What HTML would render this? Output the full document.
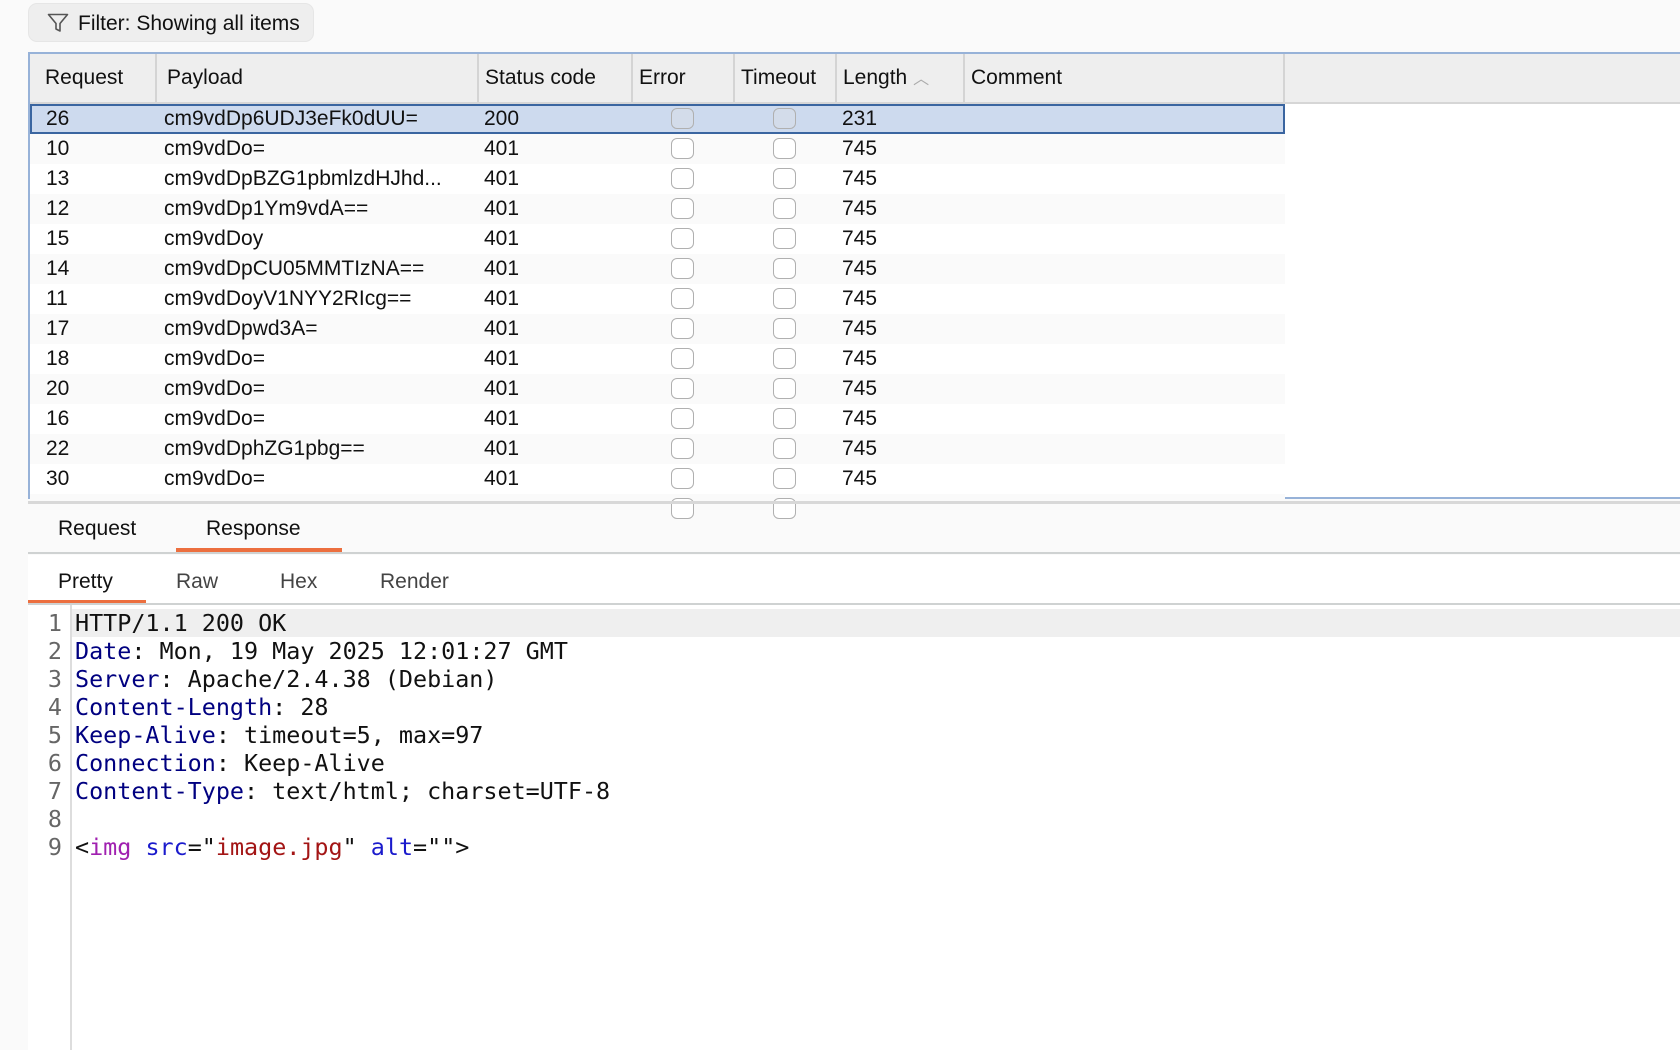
<!DOCTYPE html>
<html><head><meta charset="utf-8"><style>
*{margin:0;padding:0;box-sizing:border-box}
body{width:1680px;height:1050px;background:#fafafa;position:relative;overflow:hidden;font-family:"Liberation Sans",sans-serif;color:#111}
.a{position:absolute}
.btn{left:28px;top:3px;width:286px;height:39px;background:#eeeeee;border-radius:9px;border:1px solid #e6e6e6}
.btn span{position:absolute;left:49px;top:8px;font-size:21px}
.tbl{left:28px;top:52px;width:1652px;height:447px;background:#fff;border:2px solid #97b2d8;border-right:none}
.hdr{left:0;top:0;width:1652px;height:50px;background:#eeeeee;border-bottom:2px solid #d6d6d6}
.hc{position:absolute;top:0;height:48px;line-height:48px;font-size:21px;border-right:2px solid #d4d4d4;padding-left:15px}
.row{position:absolute;left:0;width:1255px;height:30px;font-size:21px;line-height:30px}
.row span{position:absolute;top:0}
.odd{background:#fafafa}
.sel{background:#cddaee;border:2px solid #3a65a0;line-height:26px}
.cb{position:absolute;width:23px;height:21px;border:1.5px solid #b0b0b0;border-radius:6px;background:#fff;top:4px}
.sel .cb{top:2px;background:#d3dcea}
.tab{font-size:21px;position:absolute}
.code{font-family:"DejaVu Sans Mono","Liberation Mono",monospace;font-size:23.4px;line-height:28px;white-space:pre}
.k{color:#000080}.t{color:#a020b0}.at{color:#1a1acc}.v{color:#a31515}
</style></head><body>
<div class="a btn"><svg class="a" style="left:18px;top:9px" width="22" height="20" viewBox="0 0 22 20"><path d="M1.5 1.5H20.5L13 10.5V18L9 16V10.5Z" fill="none" stroke="#555" stroke-width="1.6" stroke-linejoin="round"/></svg><span>Filter: Showing all items</span></div>
<div class="a tbl">
<div class="a hdr">
<div class="hc" style="left:0;width:127px">Request</div>
<div class="hc" style="left:127px;width:322px;padding-left:10px">Payload</div>
<div class="hc" style="left:449px;width:154px;padding-left:6px">Status code</div>
<div class="hc" style="left:603px;width:102px;padding-left:6px">Error</div>
<div class="hc" style="left:705px;width:102px;padding-left:6px">Timeout</div>
<div class="hc" style="left:807px;width:128px;padding-left:6px">Length <span style="color:#aaa;font-size:16px">&#xFE3F;</span></div>
<div class="hc" style="left:935px;width:320px;padding-left:6px">Comment</div>
</div>
<div id="rows"></div>
</div>
<div class="a" style="left:28px;top:501px;width:1652px;height:3px;background:#d8d8d8"></div>
<div class="a" style="left:28px;top:552px;width:1652px;height:2px;background:#cfd2d2"></div>
<div class="tab" style="left:58px;top:517px">Request</div>
<div class="tab" style="left:206px;top:517px">Response</div>
<div class="a" style="left:176px;top:548px;width:166px;height:4px;background:#ec6f3f"></div>
<div class="a" style="left:28px;top:555px;width:1652px;height:48px;background:#fff"></div>
<div class="tab" style="left:58px;top:570px">Pretty</div>
<div class="tab" style="left:176px;top:570px;color:#444">Raw</div>
<div class="tab" style="left:280px;top:570px;color:#444">Hex</div>
<div class="tab" style="left:380px;top:570px;color:#444">Render</div>
<div class="a" style="left:28px;top:600px;width:118px;height:4px;background:#ec6f3f"></div>
<div class="a" style="left:28px;top:603px;width:1652px;height:2px;background:#cfd2d2"></div>
<div class="a" style="left:28px;top:605px;width:1652px;height:445px;background:#fff"></div>
<div class="a" style="left:70px;top:605px;width:2px;height:445px;background:#ddd"></div>
<div class="a" style="left:72px;top:609px;width:1608px;height:28px;background:#efefef"></div>
<div class="a code" style="left:38px;top:609px;color:#666;text-align:right;width:24px">1
2
3
4
5
6
7
8
9</div>
<div class="a code" style="left:75px;top:609px">HTTP/1.1 200 OK
<span class="k">Date</span>: Mon, 19 May 2025 12:01:27 GMT
<span class="k">Server</span>: Apache/2.4.38 (Debian)
<span class="k">Content-Length</span>: 28
<span class="k">Keep-Alive</span>: timeout=5, max=97
<span class="k">Connection</span>: Keep-Alive
<span class="k">Content-Type</span>: text/html; charset=UTF-8

&lt;<span class="t">img</span> <span class="at">src</span>="<span class="v">image.jpg</span>" <span class="at">alt</span>=""&gt;</div>
<script>
var d=[["26","cm9vdDp6UDJ3eFk0dUU=","200","231"],["10","cm9vdDo=","401","745"],["13","cm9vdDpBZG1pbmlzdHJhd...","401","745"],["12","cm9vdDp1Ym9vdA==","401","745"],["15","cm9vdDoy","401","745"],["14","cm9vdDpCU05MMTIzNA==","401","745"],["11","cm9vdDoyV1NYY2RIcg==","401","745"],["17","cm9vdDpwd3A=","401","745"],["18","cm9vdDo=","401","745"],["20","cm9vdDo=","401","745"],["16","cm9vdDo=","401","745"],["22","cm9vdDphZG1pbg==","401","745"],["30","cm9vdDo=","401","745"],["","","",""]];
var h="";
d.forEach(function(r,i){var c=i==0?"row sel":(i%2?"row odd":"row");var o=i==0?-2:0;
h+='<div class="'+c+'" style="top:'+(50+30*i)+'px">'+
'<span style="left:'+(16+o)+'px">'+r[0]+'</span><span style="left:'+(134+o)+'px">'+r[1]+'</span><span style="left:'+(454+o)+'px">'+r[2]+'</span>'+
'<div class="cb" style="left:'+(641+o)+'px"></div><div class="cb" style="left:'+(743+o)+'px"></div>'+
'<span style="left:'+(812+o)+'px">'+r[3]+'</span></div>';});
document.getElementById("rows").innerHTML=h;
</script>
</body></html>
